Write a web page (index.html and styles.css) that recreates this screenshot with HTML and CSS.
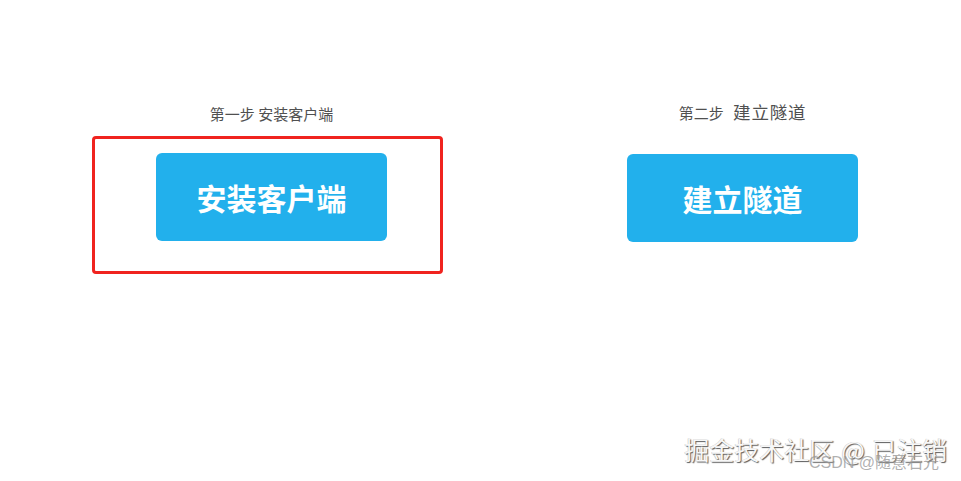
FILE: index.html
```html
<!DOCTYPE html>
<html lang="zh-CN">
<head>
<meta charset="utf-8">
<title>安装客户端</title>
<link rel="stylesheet" href="styles.css">
</head>
<body>
<main class="page">
  <section class="step step-one">
    <div class="label">第一步 安装客户端</div>
    <div class="stage stage-marked">
      <button class="action">安装客户端</button>
    </div>
  </section>
  <section class="step step-two">
    <div class="label">第二步 <span class="label-wide">建立隧道</span></div>
    <div class="stage">
      <button class="action">建立隧道</button>
    </div>
  </section>
</main>
<div class="watermark">
  <div class="wm-main">掘金技术社区 @ 已注销</div>
  <div class="wm-sub">CSDN @随意石光</div>
</div>
</body>
</html>
```
FILE: styles.css
```css
html, body {
  margin: 0;
  padding: 0;
  background: #ffffff;
  width: 961px;
  height: 481px;
  overflow: hidden;
  font-family: "Noto Sans CJK SC", "Noto Sans", sans-serif;
}

.page {
  display: flex;
  align-items: flex-start;
  padding-left: 92px;
  gap: 120px;
}

.step {
  display: flex;
  flex-direction: column;
  width: 351px;
}

.step-one {
  margin-top: 104px;
}

.step-two {
  margin-top: 102px;
}

.label {
  font-size: 15px;
  line-height: 20px;
  color: #505050;
  text-align: center;
  padding-left: 8px;
  white-space: pre;
}

.label-wide {
  font-size: 17.5px;
  letter-spacing: 0.8px;
  margin-left: 6px;
}

.step-one .label {
  margin-bottom: 12px;
}

.step-two .label {
  margin-bottom: 14px;
}

.stage {
  border: 3px solid transparent;
  border-radius: 4px;
  padding: 14px 53px 30px 61px;
}

.stage-marked {
  border-color: #f0231f;
}

.action {
  display: flex;
  align-items: center;
  justify-content: center;
  width: 231px;
  height: 88px;
  border: none;
  border-radius: 6px;
  background: #22b0ec;
  color: #ffffff;
  font-family: "Noto Sans CJK SC", "Noto Sans", sans-serif;
  font-weight: 700;
  font-size: 30px;
  padding: 0;
  margin: 0;
}

.watermark {
  position: absolute;
  right: 14px;
  top: 433px;
  text-align: right;
}

.wm-main {
  font-size: 25px;
  line-height: 32px;
  word-spacing: 1.5px;
  color: #f7f7f7;
  text-shadow: 1px 1px 1px #5a5a5a, -0.5px -0.5px 0 #c8c8c8;
  white-space: pre;
}

.wm-sub {
  position: absolute;
  right: 8px;
  top: 21px;
  font-family: "Liberation Sans", "Noto Sans CJK SC", sans-serif;
  font-size: 16px;
  line-height: 18px;
  color: rgba(150, 150, 150, 0.75);
  white-space: nowrap;
}
```
